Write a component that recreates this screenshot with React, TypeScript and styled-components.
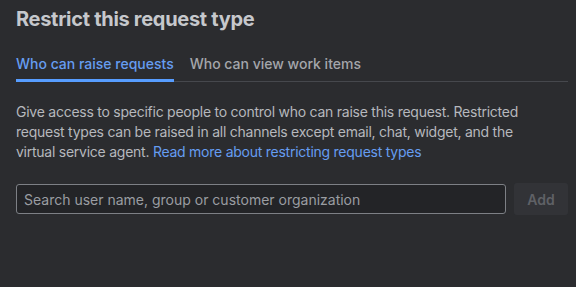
import React from 'react';
import styled, { createGlobalStyle } from 'styled-components';

const GlobalStyle = createGlobalStyle`
  html, body {
    margin: 0;
    padding: 0;
    background: #2b2c2f;
  }
  body {
    font-family: Inter, "Noto Sans", sans-serif;
    -webkit-font-smoothing: antialiased;
  }
`;

const Panel = styled.div`
  width: 576px;
  height: 287px;
  box-sizing: border-box;
  padding: 5px 8px 0 16px;
  background: #2b2c2f;
  color: #b9bbbf;
`;

const Title = styled.h2`
  margin: 0;
  font-size: 20px;
  line-height: 28px;
  font-weight: 700;
  letter-spacing: -0.3px;
  color: #c6c8cc;
`;

const TabList = styled.div`
  display: flex;
  gap: 16px;
  margin-top: 21px;
  box-shadow: inset 0 -1px 0 #46484d;
`;

const Tab = styled.div<{ $active?: boolean }>`
  font-size: 14px;
  line-height: 20px;
  font-weight: 500;
  padding-bottom: 5px;
  color: ${(p) => (p.$active ? '#669df1' : '#a4a6ab')};
  border-bottom: 3px solid ${(p) => (p.$active ? '#579dff' : 'transparent')};
`;

const Description = styled.p`
  margin: 20px 0 0;
  font-size: 14px;
  letter-spacing: -0.25px;
  line-height: 20px;
  color: #b6b8bd;
  max-width: 506px;
`;

const Link = styled.a`
  color: #669df1;
  text-decoration: none;
`;

const SearchRow = styled.div`
  display: flex;
  align-items: center;
  gap: 8px;
  margin-top: 21px;
`;

const SearchInput = styled.input`
  flex: 1;
  height: 30px;
  box-sizing: border-box;
  padding: 0 7px;
  border: 1px solid #7d8085;
  border-radius: 3px;
  background: #232427;
  color: #c4c6ca;
  font-family: inherit;
  font-size: 14px;
  outline: none;
  &::placeholder {
    color: #9a9da2;
  }
`;

const AddButton = styled.button`
  width: 54px;
  height: 32px;
  border: none;
  border-radius: 3px;
  background: #323337;
  color: #5f6166;
  font-family: inherit;
  font-size: 14px;
  font-weight: 600;
`;

export default function App() {
  return (
    <>
      <GlobalStyle />
      <Panel>
        <Title>Restrict this request type</Title>
        <TabList>
          <Tab $active>Who can raise requests</Tab>
          <Tab>Who can view work items</Tab>
        </TabList>
        <Description>
          Give access to specific people to control who can raise this request. Restricted
          request types can be raised in all channels except email, chat, widget, and the
          virtual service agent. <Link href="#">Read more about restricting request types</Link>
        </Description>
        <SearchRow>
          <SearchInput placeholder="Search user name, group or customer organization" />
          <AddButton disabled>Add</AddButton>
        </SearchRow>
      </Panel>
    </>
  );
}
